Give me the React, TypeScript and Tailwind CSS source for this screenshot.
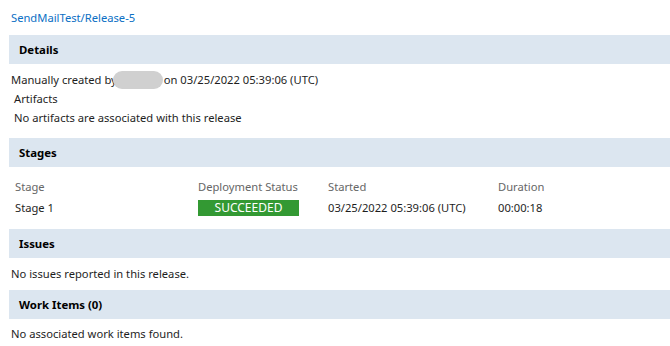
import React from "react";

function Band({ title }: { title: string }) {
  return (
    <div className="h-[29px] bg-[#dce6f0] flex items-center pl-[10px] font-bold text-[11.4px] text-black">
      {title}
    </div>
  );
}

export default function App() {
  return (
    <div
      className="w-[670px] h-[346px] bg-white pl-[9px] text-[11.2px] text-[#1e1e1e] overflow-hidden"
      style={{ fontFamily: '"Noto Sans", "Open Sans", sans-serif' }}
    >
      <div className="pt-[10px] h-[35px] pl-[2px]">
        <span className="leading-[16px] block text-[#0b6fc4]">SendMailTest/Release-5</span>
      </div>
      <Band title="Details" />
      <div className="pt-[6px] pb-[11px] leading-[19px]">
        <div className="pl-[2px] flex items-center">
          <span>Manually created by</span>
          <span className="relative inline-block w-[50px] h-[18px] rounded-full bg-[#d0d0d0] -ml-[4px] mr-[1px]" />
          <span>on 03/25/2022 05:39:06 (UTC)</span>
        </div>
        <div className="pl-[5px]">Artifacts</div>
        <div className="pl-[5px]">No artifacts are associated with this release</div>
      </div>
      <Band title="Stages" />
      <div className="pt-[10px] pb-[11px] pl-[6px]">
        <div className="grid grid-cols-[183px_130px_170px_1fr] leading-[20px] text-[#666]">
          <div>Stage</div>
          <div>Deployment Status</div>
          <div>Started</div>
          <div>Duration</div>
        </div>
        <div className="grid grid-cols-[183px_130px_170px_1fr] items-center h-[20px] mt-[1px]">
          <div>Stage 1</div>
          <div>
            <div className="w-[101px] h-[16px] bg-[#339933] text-white text-[12px] flex items-center justify-center leading-none">
              SUCCEEDED
            </div>
          </div>
          <div>03/25/2022 05:39:06 (UTC)</div>
          <div>00:00:18</div>
        </div>
      </div>
      <Band title="Issues" />
      <div className="pt-[6px] pb-[7px] leading-[19px] pl-[2px]">No issues reported in this release.</div>
      <Band title="Work Items (0)" />
      <div className="pt-[5px] leading-[19px] pl-[2px]">No associated work items found.</div>
    </div>
  );
}
